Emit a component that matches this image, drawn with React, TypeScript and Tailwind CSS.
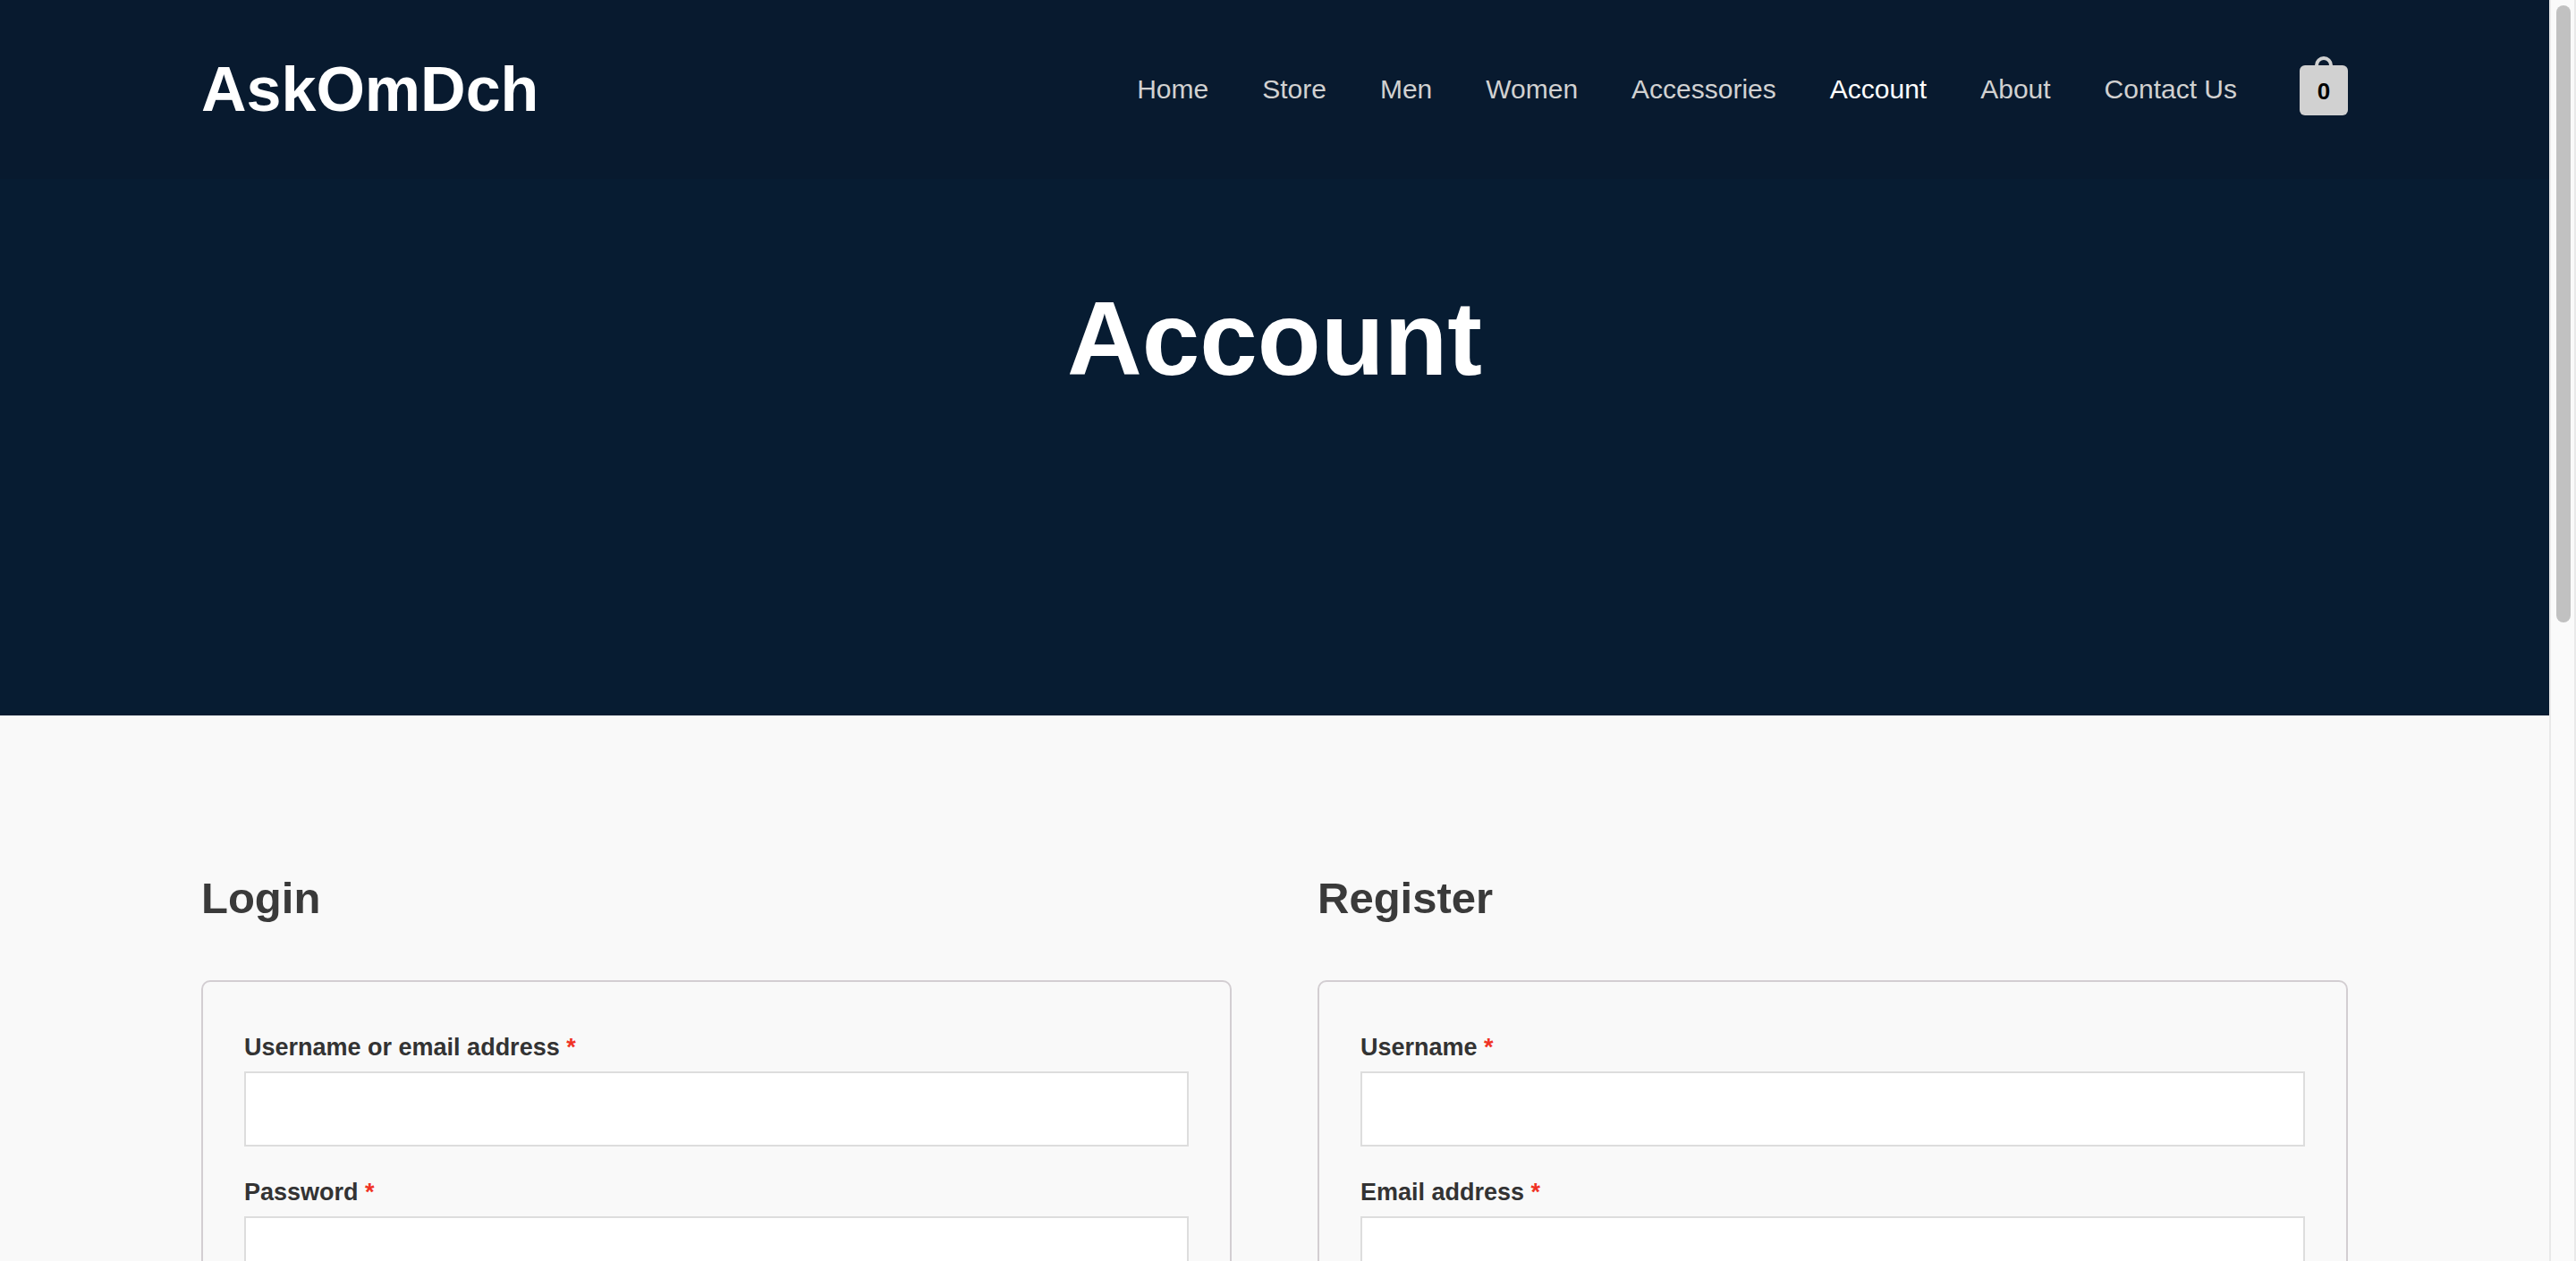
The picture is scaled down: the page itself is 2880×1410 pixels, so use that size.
import React from "react";

const links = ["Home", "Store", "Men", "Women", "Accessories", "Account", "About", "Contact Us"];

function CartButton() {
  return (
    <button type="button" aria-label="View cart, 0 items" className="relative mt-0.5 h-14 w-[54px] rounded-md bg-[#d1d1d1]">
      <span className="absolute -top-2.5 left-[17px] h-3 w-5 rounded-t-full border-4 border-b-0 border-[#d1d1d1]" />
      <span className="block text-center text-[26px] leading-[58px] font-bold text-black">0</span>
    </button>
  );
}

function Header() {
  return (
    <header className="bg-[#081a2f]">
      <div className="mx-auto flex h-[200px] max-w-[2400px] items-center justify-between">
        <a href="#home" className="text-[70px] leading-none font-bold text-white">
          AskOmDch
        </a>
        <div className="flex items-center gap-[70px]">
          <nav className="flex gap-[60px] text-[30px] leading-[60px]">
            {links.map((label) => (
              <a key={label} href="#" className={label === "Account" ? "text-white" : "text-[#d1d1d1]"}>
                {label}
              </a>
            ))}
          </nav>
          <CartButton />
        </div>
      </div>
    </header>
  );
}

type FieldProps = { id: string; label: string; type: string };

function Field({ id, label, type }: FieldProps) {
  return (
    <div className="flex flex-col">
      <label htmlFor={id} className="text-[27px] leading-[54px] font-bold text-[#333333]">
        {label} <span className="text-[#f03224]">*</span>
      </label>
      <input
        id={id}
        type={type}
        required
        className="h-[84px] w-full border-2 border-[#dddddd] bg-white px-6 text-[27px] text-[#333333] outline-none"
      />
    </div>
  );
}

function FormCard({ title, fields }: { title: string; fields: FieldProps[] }) {
  return (
    <section>
      <h2 className="mb-[60px] text-[49px] leading-[64px] font-bold text-[#3a3a3a]">{title}</h2>
      <form className="flex flex-col gap-6 rounded-[10px] border-2 border-[#d3ced2] p-[46px]">
        {fields.map((field) => (
          <Field key={field.id} {...field} />
        ))}
      </form>
    </section>
  );
}

function ScrollTrack() {
  return (
    <div aria-hidden="true" className="w-[30px] shrink-0 border-x-2 border-[#e9e9e9] bg-[#fafafa] px-1.5 py-1.5">
      <div className="h-[690px] w-4 rounded-full bg-[#c1c1c1]" />
    </div>
  );
}

export default function App() {
  return (
    <div className="flex h-screen overflow-hidden bg-[#f9f9f9] font-['Liberation_Sans',Arial,sans-serif]">
      <div className="min-w-0 flex-1 overflow-hidden">
        <div className="bg-[#071c32]">
          <Header />
          <div className="h-[600px] pt-[119px]">
            <h1 className="text-center text-[116px] leading-[120px] font-bold text-white">Account</h1>
          </div>
        </div>
        <main className="mx-auto grid max-w-[2400px] grid-cols-2 gap-24 pt-[172px]">
          <FormCard
            title="Login"
            fields={[
              { id: "login-user", label: "Username or email address", type: "text" },
              { id: "login-password", label: "Password", type: "password" },
            ]}
          />
          <FormCard
            title="Register"
            fields={[
              { id: "register-user", label: "Username", type: "text" },
              { id: "register-email", label: "Email address", type: "email" },
            ]}
          />
        </main>
      </div>
      <ScrollTrack />
    </div>
  );
}
